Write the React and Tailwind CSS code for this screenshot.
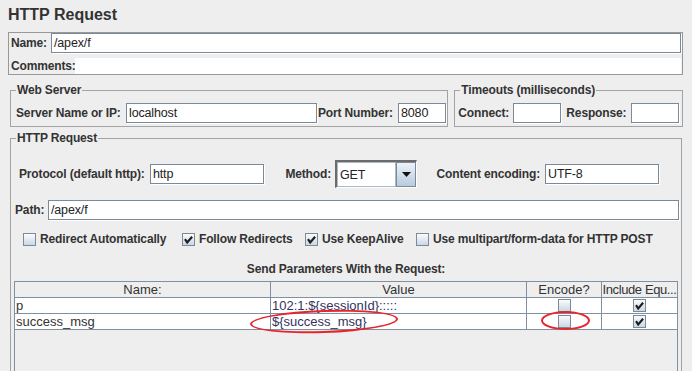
import React from 'react'

// JMeter-style "HTTP Request" sampler panel (Swing Metal/Ocean look)

const Field = ({ value, className }) => (
  <div className={`h-[20px] bg-white border border-[#7a8a99] shadow-[1px_1px_0_#ffffff] px-[2px] flex items-center text-[12.5px] font-normal text-[#222] whitespace-nowrap overflow-hidden ${className}`}>
    {value}
  </div>
)

function Check({ checked }) {
  return (
    <span className="w-[13px] h-[13px] shrink-0 border border-[#7a8a99] bg-linear-to-b from-[#fbfcfd] to-[#cbd7e4] flex items-center justify-center">
      {checked && (
        <svg width="11" height="11" viewBox="0 0 11 11">
          <path d="M2.6 6 L4.2 8.4 L8.4 3.6" fill="none" stroke="#1e1e1e" strokeWidth="2.2" strokeLinecap="square" />
        </svg>
      )}
    </span>
  )
}

const Option = ({ checked, label, className }) => (
  <div className={`flex items-center gap-[4px] ${className}`}>
    <Check checked={checked} />
    <span>{label}</span>
  </div>
)

const PARAMS = [
  { name: 'p', value: '102:1:${sessionId}:::::', encode: false, equals: true },
  { name: 'success_msg', value: '${success_msg}', encode: false, equals: true },
]

export default function App() {
  return (
    <div className="relative w-[692px] h-[371px] overflow-hidden bg-[#eeeeee] font-['Liberation_Sans',Arial,sans-serif] text-[12px] font-bold text-[#333] leading-[14px] tracking-[-0.15px]">
      <div className="pl-[8px] pr-[9px]">
        {/* title */}
        <div className="h-[32px] pt-[6px] text-[16px] leading-[18px] tracking-normal text-[#333]">HTTP Request</div>

        {/* name / comments */}
        <div className="border border-[#999999] pl-[2px] pr-[1px]">
          <div className="flex items-center h-[20px]">
            <span className="w-[40px]">Name:</span>
            <Field value="/apex/f" className="flex-1" />
          </div>
          <div className="flex items-center h-[16px] mt-[5px]">
            <span className="w-[64px]">Comments:</span>
            <div className="flex-1 h-full bg-white" />
          </div>
        </div>

        {/* web server + timeouts */}
        <div className="flex gap-[6px] mt-[8px] pl-[2px]">
          <fieldset className="w-[439px] border border-[#a3a3a3]">
            <legend className="ml-[5px] px-[1px] leading-[14px]">Web Server</legend>
            <div className="flex items-center h-[20px] mt-[6px] mb-[3px] pl-[5px]">
              <span className="w-[110px]">Server Name or IP:</span>
              <Field value="localhost" className="w-[191px]" />
              <span className="w-[81px] pl-[1px]">Port Number:</span>
              <Field value="8080" className="w-[48px]" />
            </div>
          </fieldset>
          <fieldset className="w-[229px] border border-[#a3a3a3]">
            <legend className="ml-[5px] px-[1px] leading-[14px]">Timeouts (milliseconds)</legend>
            <div className="flex items-center h-[20px] mt-[6px] mb-[3px] pl-[3px]">
              <span className="w-[55px]">Connect:</span>
              <Field value="" className="w-[48px]" />
              <span className="w-[70px] pl-[5px]">Response:</span>
              <Field value="" className="w-[48px]" />
            </div>
          </fieldset>
        </div>

        {/* http request */}
        <fieldset className="mt-[4px] ml-[2px] w-[672px] h-[300px] border border-[#a3a3a3]">
          <legend className="ml-[5px] px-[1px] leading-[14px]">HTTP Request</legend>

          <div className="flex items-center h-[28px] mt-[15px] pl-[8px]">
            <span className="w-[131px]">Protocol (default http):</span>
            <Field value="http" className="w-[114px]" />
            <span className="w-[71px] text-right pr-[4px]">Method:</span>
            <div className="flex h-[28px] w-[82px] border-t-2 border-l-2 border-r border-b border-t-[#6b6b6b] border-l-[#6b6b6b] border-r-white border-b-white">
              <div className="flex-1 bg-white border border-[#a9b9c9] flex items-center pl-[2px] text-[12.5px] font-normal text-[#222]">GET</div>
              <div className="w-[20px] border border-[#7a8a99] bg-linear-to-b from-[#edf2f7] to-[#b8cbde] flex items-center justify-center">
                <svg width="9" height="5" viewBox="0 0 9 5">
                  <path d="M0 0 H9 L4.5 5 Z" fill="#111" />
                </svg>
              </div>
            </div>
            <span className="w-[128px] text-right pr-[5px]">Content encoding:</span>
            <Field value="UTF-8" className="w-[114px]" />
          </div>

          <div className="flex items-center h-[20px] mt-[12px] pl-[4px] pr-[2px]">
            <span className="w-[33px]">Path:</span>
            <Field value="/apex/f" className="flex-1" />
          </div>

          <div className="flex items-center h-[16px] mt-[11px] pl-[12px]">
            <Option checked={false} label="Redirect Automatically" className="w-[159px]" />
            <Option checked={true} label="Follow Redirects" className="w-[123px]" />
            <Option checked={true} label="Use KeepAlive" className="w-[111px]" />
            <Option checked={false} label="Use multipart/form-data for HTTP POST" />
          </div>

          <div className="mt-[15px] text-center leading-[14px]">Send Parameters With the Request:</div>

          {/* parameters table */}
          <div className="mt-[5px] ml-[3px] w-[664px] h-[120px] border border-[#8090a0] font-normal text-[13px] tracking-normal text-[#333]">
            <div className="flex h-[16px] border-b border-[#8090a0] leading-[15px]">
              <div className="w-[256px] border-r border-[#8090a0] text-center">Name:</div>
              <div className="w-[256px] border-r border-[#8090a0] text-center">Value</div>
              <div className="w-[75px] border-r border-[#8090a0] text-center">Encode?</div>
              <div className="flex-1 text-center whitespace-nowrap tracking-[-0.4px]">Include Equ...</div>
            </div>
            {PARAMS.map((p) => (
              <div key={p.name} className="flex h-[16px] bg-white border-b border-[#8090a0] leading-[15px]">
                <div className="w-[256px] border-r border-[#8090a0] pl-[1px]">{p.name}</div>
                <div className="w-[256px] border-r border-[#8090a0] pl-[1px] text-[#333360]">{p.value}</div>
                <div className="w-[75px] border-r border-[#8090a0] flex items-center justify-center">
                  <Check checked={p.encode} />
                </div>
                <div className="flex-1 flex items-center justify-center">
                  <Check checked={p.equals} />
                </div>
              </div>
            ))}
          </div>
        </fieldset>
      </div>

      {/* red annotation marks */}
      <div className="absolute left-[250px] top-[310px] w-[148px] h-[23px] rounded-[50%] border-2 border-[#e5262f] -rotate-[2deg]" />
      <div className="absolute left-[541px] top-[311px] w-[49px] h-[19px] rounded-[50%] border-2 border-[#e5262f]" />
    </div>
  )
}
